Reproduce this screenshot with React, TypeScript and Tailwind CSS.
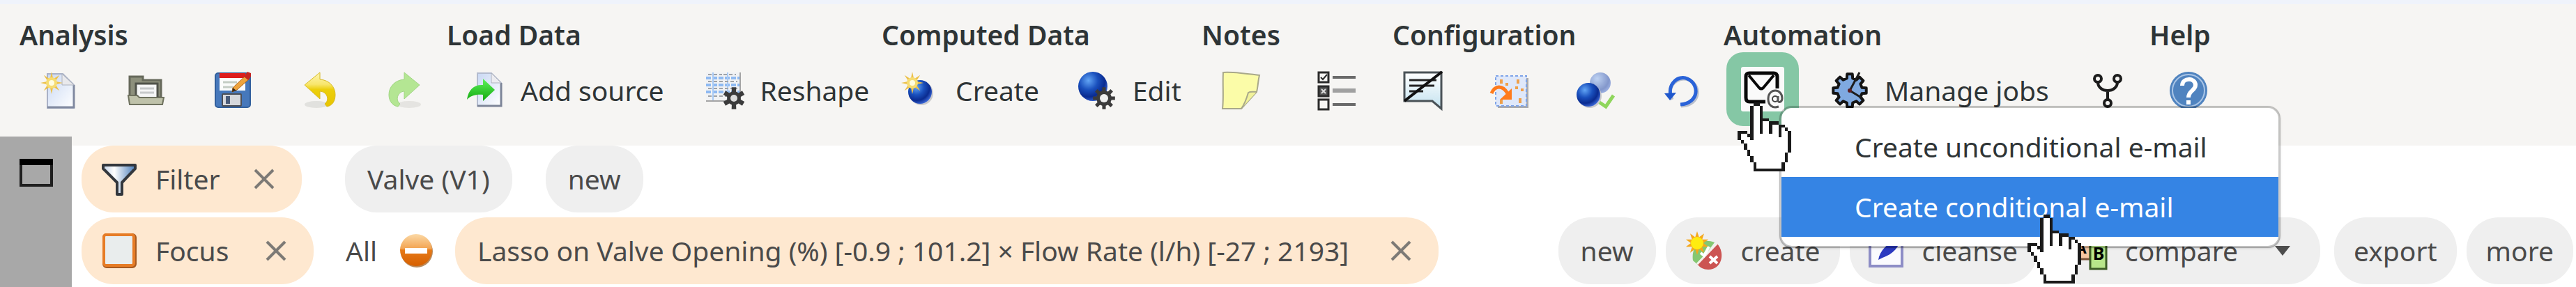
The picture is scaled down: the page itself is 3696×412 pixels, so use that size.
import type { ReactNode } from 'react'

const INK = '#1a1a1a'

const HAND = [
  '.....##..........',
  '....#oo#.........',
  '....#oo#.........',
  '....#oo#.........',
  '....#oo#.........',
  '....#oo###.......',
  '....#oo#oo###....',
  '....#oo#oo#oo##..',
  '....#oo#oo#oo#o#.',
  '###.#oo#oo#oo#oo#',
  '#oo##oooooooo#oo#',
  '#ooo#ooooooooooo#',
  '.#oooooooooooooo#',
  '..#ooooooooooooo#',
  '..#ooooooooooooo#',
  '...#oooooooooooo#',
  '...#ooooooooooo#.',
  '....#oooooooooo#.',
  '....#oooooooooo#.',
  '.....#oooooooo#..',
  '.....#oooooooo#..',
  '.....##########..',
]

function HandPointer() {
  return (
    <svg viewBox="0 0 17 22" className="block w-[77px] h-[99px]" shapeRendering="crispEdges" aria-hidden="true">
      {HAND.flatMap((row, y) =>
        row.split('').map((c, x) =>
          c === '.' ? null : <rect key={`${x}-${y}`} x={x} y={y} width="1" height="1" fill={c === '#' ? INK : '#ffffff'} />
        )
      )}
    </svg>
  )
}

function Icon({ children }: { children: ReactNode }) {
  return (
    <svg viewBox="0 0 56 56" className="block w-14 h-14 shrink-0 overflow-visible" fill="none" aria-hidden="true">
      {children}
    </svg>
  )
}

// points of a star with n spikes around (cx, cy)
function star(cx: number, cy: number, n: number, outer: number, inner: number) {
  const pts: string[] = []
  for (let i = 0; i < n * 2; i++) {
    const r = i % 2 === 0 ? outer : inner
    const a = (Math.PI * i) / n - Math.PI / 2
    pts.push(`${(cx + r * Math.cos(a)).toFixed(2)},${(cy + r * Math.sin(a)).toFixed(2)}`)
  }
  return pts.join(' ')
}

// points of a cog with n square teeth
function cog(cx: number, cy: number, n: number, outer: number, inner: number) {
  const pts: string[] = []
  const step = (Math.PI * 2) / n
  for (let i = 0; i < n; i++) {
    const mid = i * step - Math.PI / 2
    for (const [r, d] of [[inner, -0.3], [outer, -0.2], [outer, 0.2], [inner, 0.3]]) {
      const a = mid + d * step
      pts.push(`${(cx + r * Math.cos(a)).toFixed(2)},${(cy + r * Math.sin(a)).toFixed(2)}`)
    }
  }
  return pts.join(' ')
}

function Defs() {
  return (
    <svg className="absolute w-0 h-0" aria-hidden="true">
      <defs>
        <linearGradient id="page" x1="0" y1="0" x2="1" y2="1">
          <stop offset="0" stopColor="#c9d8f3" />
          <stop offset="1" stopColor="#ffffff" />
        </linearGradient>
        <radialGradient id="ball" cx="0.35" cy="0.3" r="0.8">
          <stop offset="0" stopColor="#62a5f5" />
          <stop offset="0.4" stopColor="#1a50bd" />
          <stop offset="0.7" stopColor="#0a2b90" />
          <stop offset="1" stopColor="#4c7df0" />
        </radialGradient>
        <radialGradient id="paleBall" cx="0.35" cy="0.3" r="0.8">
          <stop offset="0" stopColor="#bed2f2" />
          <stop offset="0.7" stopColor="#8397cb" />
          <stop offset="1" stopColor="#a5b9ea" />
        </radialGradient>
        <linearGradient id="gold" x1="0" y1="0" x2="0" y2="1">
          <stop offset="0" stopColor="#fdf6b4" />
          <stop offset="0.35" stopColor="#f8e66c" />
          <stop offset="0.5" stopColor="#eccf0c" />
          <stop offset="1" stopColor="#e8c400" />
        </linearGradient>
        <linearGradient id="leaf" x1="0" y1="0" x2="0" y2="1">
          <stop offset="0" stopColor="#5df25b" />
          <stop offset="1" stopColor="#12a80d" />
        </linearGradient>
        <linearGradient id="amber" x1="0" y1="0" x2="0" y2="1">
          <stop offset="0" stopColor="#fbd9a6" />
          <stop offset="0.45" stopColor="#f3a553" />
          <stop offset="0.5" stopColor="#e67a18" />
          <stop offset="1" stopColor="#d65f00" />
        </linearGradient>
        <linearGradient id="glass" x1="0" y1="0" x2="1" y2="0">
          <stop offset="0" stopColor="#c3d3e8" />
          <stop offset="0.35" stopColor="#ffffff" />
          <stop offset="1" stopColor="#4a7dba" />
        </linearGradient>
        <linearGradient id="bubble" x1="0" y1="0" x2="0" y2="1">
          <stop offset="0" stopColor="#ffffff" />
          <stop offset="1" stopColor="#c3e2ef" />
        </linearGradient>
      </defs>
    </svg>
  )
}

function Sun({ cx, cy }: { cx: number; cy: number }) {
  return (
    <g>
      <polygon points={star(cx, cy, 8, 16, 6)} fill="#ecc04a" />
      <circle cx={cx} cy={cy} r="8" fill="#f6dc72" />
      <circle cx={cx} cy={cy} r="4" fill="#fffde0" />
    </g>
  )
}

const NewIcon = () => (
  <Icon>
    <path d="M12 4H34L50 20V53H12Z" fill="url(#page)" stroke="#a9b1c6" strokeWidth="2" />
    <path d="M50 20V52H12" stroke="#8089a0" strokeWidth="3" />
    <path d="M33 4V20H50Z" fill="#e9e9ec" stroke="#aeb3bf" />
    <Sun cx={18} cy={17} />
  </Icon>
)

const OpenIcon = () => (
  <Icon>
    <path d="M5 8H24V13H50V38H5Z" fill="#8d907c" stroke="#66695b" strokeWidth="3" />
    <rect x="14" y="18" width="31" height="24" fill="#f5f6f6" stroke="#50534a" strokeWidth="3" />
    <path d="M20 25H40M20 31H40" stroke="#c7cacb" strokeWidth="3" />
    <path d="M3 35H16L19 38H54L52 48H5Z" fill="#bfc2aa" stroke="#6f725f" strokeWidth="2" />
  </Icon>
)

const SaveIcon = () => (
  <Icon>
    <rect x="3" y="3" width="50" height="49" rx="4" fill="#4678bb" stroke="#315f9c" strokeWidth="2" />
    <rect x="9" y="8" width="37" height="20" fill="#fbfcfb" />
    <rect x="9" y="3" width="37" height="7" fill="#dd1c1c" />
    <path d="M14 16H34M14 23H28" stroke="#c4cdc4" strokeWidth="3" />
    <rect x="13" y="33" width="27" height="17" rx="1" fill="#d6d8dc" stroke="#4d4f55" strokeWidth="2" />
    <rect x="18" y="36" width="6" height="11" fill="#4a5b78" />
    <path d="M28 24L47 6L52 11L34 27L27 30Z" fill="#eea43d" stroke="#a9641c" />
    <path d="M44 8L49 1L54 3L54 8L50 13Z" fill="#c62520" />
    <path d="M27 30L28 24L33 28Z" fill="#3a2a18" />
  </Icon>
)

const UndoIcon = () => (
  <Icon>
    <ellipse cx="23" cy="48" rx="17" ry="5" fill="#d9d8d4" opacity="0.7" />
    <path d="M28 2V12C42 13 50 23 50 34C50 44 45 50 38 51L35 47C42 42 39 30 28 29V40L6 20Z" fill="url(#gold)" stroke="#d8ba25" />
  </Icon>
)

const RedoIcon = () => (
  <Icon>
    <ellipse cx="31" cy="48" rx="17" ry="5" fill="#deddd9" opacity="0.7" />
    <path d="M24 2V12C10 13 2 23 2 34C2 44 8 50 15 51L18 47C11 42 14 30 24 29V40L46 20Z" fill="#b4e693" stroke="#a0d583" />
  </Icon>
)

const AddSourceIcon = () => (
  <Icon>
    <path d="M16 3H36L50 17V50H16Z" fill="url(#page)" stroke="#b4bccf" strokeWidth="2" />
    <path d="M50 17V50H16" stroke="#7d8598" strokeWidth="3" />
    <path d="M36 3V17H50Z" fill="#ececf0" stroke="#aeb3bf" />
    <path d="M1 41C3 26 12 19 24 20V11L41 27L24 43V34C15 33 6 35 1 41Z" fill="url(#leaf)" />
  </Icon>
)

const ReshapeIcon = () => (
  <Icon>
    <rect x="1" y="2" width="49" height="41" fill="#f1f2f4" />
    <path d="M1 10H50M1 20H50M1 30H50" stroke="#8fbaf2" strokeWidth="4" strokeDasharray="7 2" />
    <path d="M11 2V43M32 2V43" stroke="#a9caf5" strokeWidth="2" />
    <path d="M4 5H24M26 5H44M4 15H46M4 25H46M4 36H30" stroke="#9fa3a8" strokeWidth="2" strokeDasharray="5 3" />
    <path d="M50 2V43H1" stroke="#a4a4a4" strokeWidth="2" />
    <polygon points={cog(41, 39, 6, 16, 10)} fill="#3b3b3b" />
    <circle cx="41" cy="39" r="5" fill="#dcdcdc" />
  </Icon>
)

const CreateIcon = () => (
  <Icon>
    <circle cx="29" cy="32" r="17" fill="#c9c9cc" />
    <circle cx="27" cy="30" r="17" fill="url(#ball)" />
    <Sun cx={16} cy={17} />
  </Icon>
)

const EditIcon = () => (
  <Icon>
    <circle cx="21" cy="22" r="21" fill="url(#ball)" />
    <polygon points={cog(37, 39, 8, 16, 11)} fill="#3b3b3b" />
    <circle cx="37" cy="39" r="6" fill="#f0f0f0" />
  </Icon>
)

const NoteIcon = () => (
  <Icon>
    <path d="M3 2C20 1 38 4 55 6C53 14 53 22 51 30L29 54H2C4 38 2 20 3 2Z" fill="#fbfca8" stroke="#a8a88a" strokeWidth="2" />
    <path d="M51 30C46 30 42 29 39 31C37 38 34 47 29 54" fill="#f1f29a" stroke="#a8a88a" strokeWidth="2" />
  </Icon>
)

const LegendIcon = () => (
  <Icon>
    <rect x="2" y="2" width="14" height="14" fill="#f6f5f3" stroke="#2b2b2b" strokeWidth="3" />
    <path d="M5 9L8 12L14 5" stroke="#2b2b2b" strokeWidth="2" />
    <rect x="2" y="22" width="14" height="14" fill="#555" stroke="#2b2b2b" strokeWidth="3" />
    <path d="M6 26L12 32M12 26L6 32" stroke="#ddd" strokeWidth="2" />
    <rect x="2" y="41" width="14" height="14" fill="#f6f5f3" stroke="#2b2b2b" strokeWidth="3" />
    <path d="M22 9H55M22 48H55" stroke="#6a6a6a" strokeWidth="4" />
    <path d="M22 28H55" stroke="#a0a0a0" strokeWidth="6" />
  </Icon>
)

const CommentIcon = () => (
  <Icon>
    <path d="M1 2H54V54L41 43H1Z" fill="url(#bubble)" stroke="#4a5257" strokeWidth="3" />
    <path d="M8 13H47M8 21H44M8 29H28" stroke="#222" strokeWidth="3" />
    <path d="M55 1L1 43" stroke="#111" strokeWidth="4" />
  </Icon>
)

const ScatterIcon = () => (
  <Icon>
    <rect x="11" y="10" width="44" height="43" fill="#a9aaad" />
    <rect x="8" y="7" width="44" height="43" fill="#dfe8fa" />
    <rect x="8" y="7" width="44" height="43" stroke="#7fa4e8" strokeWidth="2" strokeDasharray="4 3" />
    <path d="M16 12V18M40 12V18M16 41V47M43 39V46M22 19H26M36 24H40M44 27H48" stroke="#efa04a" strokeWidth="4" />
    <path d="M2 32C7 20 18 20 25 32" stroke="#ff7a1c" strokeWidth="5" />
    <path d="M31 25V41H14Z" fill="#ff7a1c" />
  </Icon>
)

const DiscretizeIcon = () => (
  <Icon>
    <circle cx="34" cy="17" r="15" fill="url(#paleBall)" />
    <circle cx="19" cy="36" r="17" fill="#c9c9cc" />
    <circle cx="17" cy="34" r="17" fill="url(#ball)" />
    <path d="M33 45L42 51L53 35" stroke="#8fd65c" strokeWidth="5" />
  </Icon>
)

const ReloadIcon = () => (
  <Icon>
    <path d="M13 41C4 20 22 7 36 12C54 19 56 48 26 50" stroke="#b9bfcc" strokeWidth="5" />
    <path d="M12 38C5 19 22 5 35 11C53 19 52 46 25 48" stroke="#2a63d8" strokeWidth="5" />
    <path d="M2 32L19 31L10 42Z" fill="#1f57cc" />
  </Icon>
)

const MailIcon = () => (
  <Icon>
    <path d="M49 25V8C49 5 47 3 44 3H9C5 3 4 5 4 8V38C4 42 6 44 9 44H32" stroke="#080808" strokeWidth="5" />
    <path d="M8 6L23 24C25 26 27 26 29 24L44 6" stroke="#080808" strokeWidth="4" />
    <circle cx="46" cy="40" r="4" stroke="#444" strokeWidth="2" />
    <path d="M50 36V43C52 46 56 44 56 39C56 32 51 28 46 28C40 28 36 33 36 40C36 49 42 54 51 51" stroke="#555" strokeWidth="3" />
  </Icon>
)

const JobsIcon = () => (
  <Icon>
    <polygon points={cog(28, 28, 8, 24, 18)} fill="#7fa9e0" stroke="#141414" strokeWidth="4" strokeLinejoin="round" />
    <path d="M42 2L28 28L46 39" stroke="#1d1d1d" strokeWidth="3" />
    <circle cx="28" cy="28" r="3" fill="#5b1f24" />
  </Icon>
)

const ForkIcon = () => (
  <Icon>
    <g stroke="#1c1c1c" strokeWidth="4">
      <path d="M14 16C14 23 20 28 28 28C36 28 42 23 42 16M28 28V40" />
      <circle cx="14" cy="11" r="5" />
      <circle cx="42" cy="11" r="5" />
      <circle cx="28" cy="46" r="5" />
    </g>
  </Icon>
)

const HelpIcon = () => (
  <Icon>
    <circle cx="28" cy="28" r="27" fill="#4f83bf" />
    <circle cx="28" cy="28" r="23" stroke="#a9c5e6" strokeWidth="2" />
    <path d="M19 21C19 9 38 9 38 20C38 28 28 28 28 38" stroke="#fff" strokeWidth="6" />
    <rect x="25" y="42" width="6" height="6" fill="#fff" />
  </Icon>
)

const FunnelIcon = () => (
  <Icon>
    <path d="M5 8H51V13L32 33V50H25V33L5 13Z" fill="url(#glass)" stroke="#33373d" strokeWidth="4" strokeLinejoin="round" />
  </Icon>
)

const FocusIcon = () => (
  <Icon>
    <rect x="7" y="6" width="43" height="44" rx="3" fill="#ecefef" stroke="#a85a20" strokeWidth="6" />
    <rect x="6" y="5" width="43" height="44" rx="3" fill="#e9eded" stroke="#e67c26" strokeWidth="4" />
  </Icon>
)

const MinusIcon = () => (
  <Icon>
    <circle cx="29" cy="29" r="23" fill="#b98a5c" />
    <circle cx="28" cy="27" r="23" fill="url(#amber)" />
    <rect x="12" y="24" width="32" height="8" fill="#ffffff" />
  </Icon>
)

const FocusCreateIcon = () => (
  <Icon>
    <path d="M11 42C8 22 22 8 42 16L18 48Z" fill="#85c771" />
    <path d="M46 18C58 32 52 55 33 55C26 55 21 52 18 48Z" fill="#cc5452" />
    <path d="M17 47L46 17" stroke="#f4f0ea" strokeWidth="3" />
    <path d="M22 31L27 35L34 22" stroke="#fff" strokeWidth="4" />
    <path d="M35 36L46 46M46 36L35 46" stroke="#fff" strokeWidth="4" />
    <polygon points={star(17, 17, 10, 17, 9)} fill="#f5a81c" />
    <circle cx="17" cy="17" r="9" fill="#ffec10" />
  </Icon>
)

const CleanseIcon = () => (
  <Icon>
    <rect x="5" y="6" width="46" height="44" fill="#fafafe" stroke="#8d8dc6" strokeWidth="4" />
    <path d="M17 41C19 28 30 16 49 9C48 22 38 33 23 38Z" fill="#2c3ac0" />
  </Icon>
)

const CompareIcon = () => (
  <Icon>
    <rect x="5" y="8" width="25" height="32" fill="#f6c6a0" stroke="#7a543a" strokeWidth="3" />
    <rect x="30" y="16" width="23" height="38" fill="#b8e68a" stroke="#3d5c26" strokeWidth="3" />
    <text x="17" y="32" textAnchor="middle" fontSize="22" fontWeight="700" fill="#000">A</text>
    <text x="42" y="41" textAnchor="middle" fontSize="25" fontWeight="700" fill="#000">B</text>
  </Icon>
)

function Tool({ icon, label, text }: { icon: ReactNode; label: string; text?: boolean }) {
  return (
    <button type="button" aria-label={text ? undefined : label} className="flex items-center gap-[22px] shrink-0 h-14">
      {icon}
      {text && <span className="whitespace-nowrap">{label}</span>}
    </button>
  )
}

function Group({ title, className, row, children }: { title: string; className: string; row: string; children: ReactNode }) {
  return (
    <section className={`shrink-0 ${className}`}>
      <h2 className="font-semibold whitespace-nowrap leading-14 mb-[24px]">{title}</h2>
      <div className={`flex items-center ${row}`}>{children}</div>
    </section>
  )
}

function Chip({ children, className = '' }: { children: ReactNode; className?: string }) {
  return (
    <div className={`flex items-center shrink-0 h-24 rounded-[46px] whitespace-nowrap bg-[#fee8d0] ${className}`}>
      {children}
    </div>
  )
}

function ChipButton({ children, className = 'px-8' }: { children: ReactNode; className?: string }) {
  return (
    <button type="button" className={`flex items-center shrink-0 h-24 rounded-[46px] bg-[#efefef] whitespace-nowrap ${className}`}>
      {children}
    </button>
  )
}

function CloseButton({ label }: { label: string }) {
  return (
    <button type="button" aria-label={label} className="shrink-0">
      <svg viewBox="0 0 30 30" className="block w-[30px] h-[30px]" aria-hidden="true">
        <path d="M2 2L28 28M28 2L2 28" stroke="#7d7a76" strokeWidth="4" />
      </svg>
    </button>
  )
}

function MailMenu() {
  return (
    <div
      role="menu"
      className="absolute left-[52px] top-[50px] z-20 w-[719px] py-[13px] bg-white bg-clip-padding border-3 border-black/20 rounded-[18px] shadow-sm"
    >
      <button type="button" role="menuitem" className="block w-full h-[86px] pl-[105px] text-left whitespace-nowrap">
        Create unconditional e-mail
      </button>
      <button type="button" role="menuitem" className="block w-full h-[86px] pl-[105px] text-left whitespace-nowrap text-white bg-[#3584e4]">
        Create conditional e-mail
      </button>
      <div className="absolute left-[353px] top-[153px] pointer-events-none">
        <HandPointer />
      </div>
    </div>
  )
}

function Toolbar() {
  return (
    <header className="flex h-[196px] pt-[16px] pl-7 border-t-6 border-[#eff3fb]">
      <Group title="Analysis" className="w-[613px]" row="pl-7 gap-[69px]">
        <Tool icon={<NewIcon />} label="New analysis" />
        <Tool icon={<OpenIcon />} label="Open analysis" />
        <Tool icon={<SaveIcon />} label="Save analysis" />
        <Tool icon={<UndoIcon />} label="Undo" />
        <Tool icon={<RedoIcon />} label="Redo" />
      </Group>
      <Group title="Load Data" className="w-[624px]" row="pl-7 gap-[60px]">
        <Tool icon={<AddSourceIcon />} label="Add source" text />
        <Tool icon={<ReshapeIcon />} label="Reshape" text />
      </Group>
      <Group title="Computed Data" className="w-[459px]" row="pl-7 gap-14">
        <Tool icon={<CreateIcon />} label="Create" text />
        <Tool icon={<EditIcon />} label="Edit" text />
      </Group>
      <Group title="Notes" className="w-[274px]" row="pl-7 gap-[82px]">
        <Tool icon={<NoteIcon />} label="Add note" />
        <Tool icon={<LegendIcon />} label="Note list" />
      </Group>
      <Group title="Configuration" className="w-[475px]" row="pl-4 gap-[68px]">
        <Tool icon={<CommentIcon />} label="Hide comments" />
        <Tool icon={<ScatterIcon />} label="Import chart" />
        <Tool icon={<DiscretizeIcon />} label="Apply data" />
        <Tool icon={<ReloadIcon />} label="Reload" />
      </Group>
      <Group title="Automation" className="w-[611px]" row="pl-7 gap-[69px]">
        <div className="relative shrink-0">
          <div className="absolute -left-[24px] -top-[27px] w-[104px] h-[106px] border-[21px] border-[#85c7a5] rounded-[24px] bg-[#fafafa]" />
          <div className="relative">
            <Tool icon={<MailIcon />} label="Create e-mail" />
          </div>
          <MailMenu />
          <div className="absolute -left-[8px] top-[45px] z-30 pointer-events-none">
            <HandPointer />
          </div>
        </div>
        <div className="flex gap-14">
          <Tool icon={<JobsIcon />} label="Manage jobs" text />
          <Tool icon={<ForkIcon />} label="Branches" />
        </div>
      </Group>
      <Group title="Help" className="" row="pl-7">
        <Tool icon={<HelpIcon />} label="Help" />
      </Group>
    </header>
  )
}

function FilterRow() {
  return (
    <div className="flex items-center pl-3.5">
      <Chip className="w-[316px] pl-[26px] pr-[39px]">
        <FunnelIcon />
        <span className="ml-6 mr-auto">Filter</span>
        <CloseButton label="Remove filter" />
      </Chip>
      <div className="flex gap-12 ml-[62px]">
        <ChipButton>Valve (V1)</ChipButton>
        <ChipButton>new</ChipButton>
      </div>
    </div>
  )
}

function FocusRow() {
  return (
    <div className="flex items-center pl-3.5 pr-1 mt-[7px]">
      <Chip className="w-[333px] pl-[26px] pr-[39px]">
        <FocusIcon />
        <span className="ml-6 mr-auto">Focus</span>
        <CloseButton label="Remove focus" />
      </Chip>
      <span className="ml-[46px]">All</span>
      <button type="button" aria-label="Exclude" className="ml-7 mr-7">
        <MinusIcon />
      </button>
      <Chip className="pl-8 pr-[39px] gap-[60px]">
        <span>Lasso on Valve Opening (%) [-0.9 ; 101.2] × Flow Rate (l/h) [-27 ; 2193]</span>
        <CloseButton label="Remove lasso" />
      </Chip>
      <div className="flex gap-[14px] ml-auto">
        <ChipButton>new</ChipButton>
        <ChipButton className="pl-7 pr-7 gap-6">
          <FocusCreateIcon />
          create
        </ChipButton>
        <ChipButton className="pl-6 pr-7 gap-6">
          <CleanseIcon />
          cleanse
        </ChipButton>
        <ChipButton className="pl-8 pr-[42px] gap-6">
          <CompareIcon />
          compare
          <svg viewBox="0 0 24 14" className="w-6 h-3.5 ml-7" aria-hidden="true">
            <path d="M1 0H23L12 14Z" fill="#4d4d4d" />
          </svg>
        </ChipButton>
        <ChipButton className="ml-1.5 px-7">export</ChipButton>
        <ChipButton className="px-7">more</ChipButton>
      </div>
    </div>
  )
}

export default function App() {
  return (
    <div className="flex flex-col min-h-screen overflow-hidden bg-[#f6f5f3] font-['Noto_Sans','Open_Sans',sans-serif] text-[39px] leading-14 text-[#2e3436]">
      <Defs />
      <Toolbar />
      <div className="flex grow">
        <aside className="w-[103px] shrink-0 pt-8 bg-[#a8a8a8]">
          <button type="button" aria-label="Show panel" className="block ml-7">
            <svg viewBox="0 0 48 40" className="block w-12 h-10" aria-hidden="true">
              <rect x="2" y="2" width="44" height="36" fill="none" stroke="#1f1f1f" strokeWidth="4" />
              <rect width="48" height="9" fill="#000" />
            </svg>
          </button>
        </aside>
        <main className="grow min-w-0 mt-[13px] bg-white text-[#4a4a4a]">
          <FilterRow />
          <FocusRow />
        </main>
      </div>
    </div>
  )
}
